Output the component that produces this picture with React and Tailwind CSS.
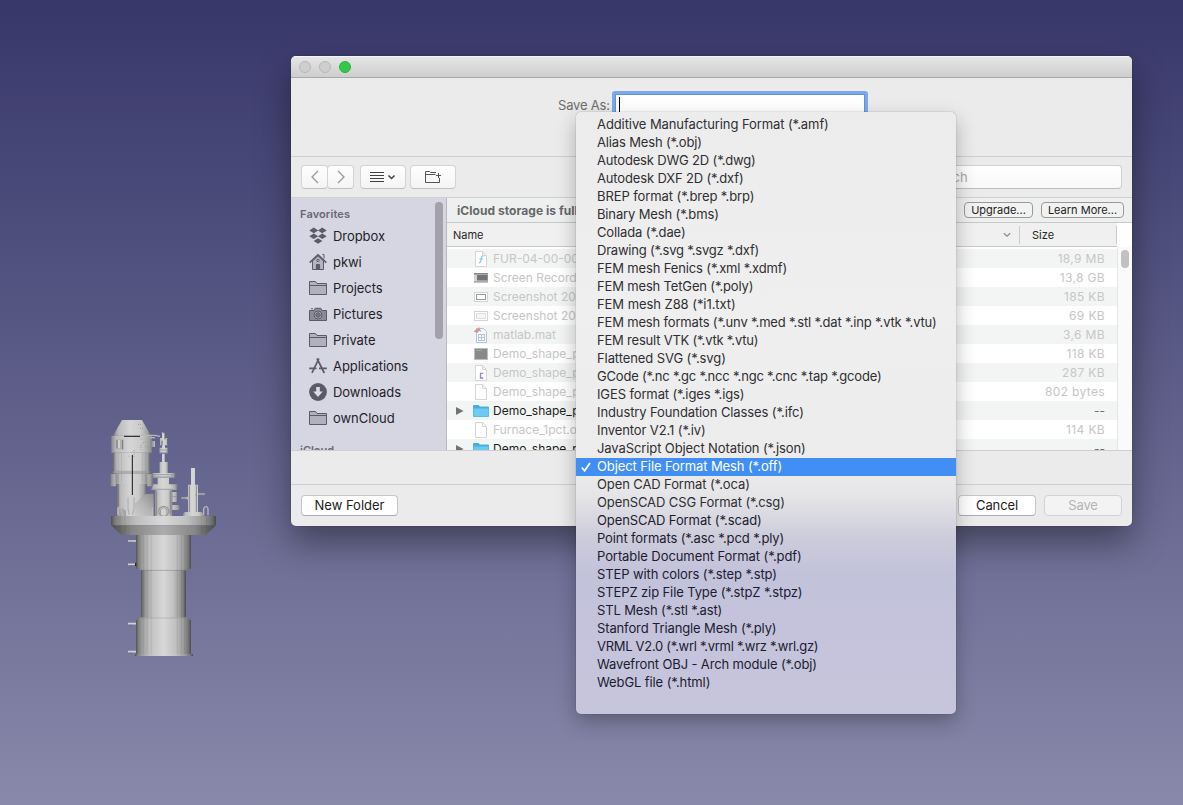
import React from "react";

const formats = [
  ["Additive Manufacturing Format (*.amf)", "tracking-[-0.09px]"],
  ["Alias Mesh (*.obj)", "tracking-[-0.15px]"],
  ["Autodesk DWG 2D (*.dwg)", "tracking-[-0.17px]"],
  ["Autodesk DXF 2D (*.dxf)", "tracking-[-0.15px]"],
  ["BREP format (*.brep *.brp)", "tracking-[-0.09px]"],
  ["Binary Mesh (*.bms)", "tracking-[-0.14px]"],
  ["Collada (*.dae)", "tracking-[-0.13px]"],
  ["Drawing (*.svg *.svgz *.dxf)", "tracking-[-0.21px]"],
  ["FEM mesh Fenics (*.xml *.xdmf)", "tracking-[-0.14px]"],
  ["FEM mesh TetGen (*.poly)", "tracking-[-0.16px]"],
  ["FEM mesh Z88 (*i1.txt)", "tracking-[-0.06px]"],
  ["FEM mesh formats (*.unv *.med *.stl *.dat *.inp *.vtk *.vtu)", "tracking-[-0.17px]"],
  ["FEM result VTK (*.vtk *.vtu)", "tracking-[-0.21px]"],
  ["Flattened SVG (*.svg)", "tracking-[-0.09px]"],
  ["GCode (*.nc *.gc *.ncc *.ngc *.cnc *.tap *.gcode)", "tracking-[-0.19px]"],
  ["IGES format (*.iges *.igs)", "tracking-[-0.12px]"],
  ["Industry Foundation Classes (*.ifc)", "tracking-[-0.11px]"],
  ["Inventor V2.1 (*.iv)", "tracking-[-0.1px]"],
  ["JavaScript Object Notation (*.json)", "tracking-[-0.1px]"],
  ["Object File Format Mesh (*.off)", "tracking-[-0.1px]"],
  ["Open CAD Format (*.oca)", "tracking-[-0.11px]"],
  ["OpenSCAD CSG Format (*.csg)", "tracking-[-0.11px]"],
  ["OpenSCAD Format (*.scad)", "tracking-[-0.1px]"],
  ["Point formats (*.asc *.pcd *.ply)", "tracking-[-0.12px]"],
  ["Portable Document Format (*.pdf)", "tracking-[-0.08px]"],
  ["STEP with colors (*.step *.stp)", "tracking-[-0.1px]"],
  ["STEPZ zip File Type (*.stpZ *.stpz)", "tracking-[-0.11px]"],
  ["STL Mesh (*.stl *.ast)", "tracking-[-0.13px]"],
  ["Stanford Triangle Mesh (*.ply)", "tracking-[-0.13px]"],
  ["VRML V2.0 (*.wrl *.vrml *.wrz *.wrl.gz)", "tracking-[-0.3px]"],
  ["Wavefront OBJ - Arch module (*.obj)", "tracking-[-0.13px]"],
  ["WebGL file (*.html)", "tracking-[-0.1px]"],
];

const SELECTED = "Object File Format Mesh (*.off)";

const places = [
  ["Dropbox", "dropbox"],
  ["pkwi", "home"],
  ["Projects", "folder"],
  ["Pictures", "camera"],
  ["Private", "folder"],
  ["Applications", "apps"],
  ["Downloads", "download"],
  ["ownCloud", "folder"],
];

const files = [
  ["FUR-04-00-00", "18,9 MB", "font"],
  ["Screen Recording", "13,8 GB", "movie"],
  ["Screenshot 2020", "185 KB", "shot"],
  ["Screenshot 2020", "69 KB", "shotLight"],
  ["matlab.mat", "3,6 MB", "matlab"],
  ["Demo_shape_pr", "118 KB", "term"],
  ["Demo_shape_pr", "287 KB", "c"],
  ["Demo_shape_pr", "802 bytes", "doc"],
  ["Demo_shape_pr", "--", "dir"],
  ["Furnace_1pct.off", "114 KB", "doc"],
  ["Demo_shape_pr", "--", "dir"],
];

function PlaceIcon({ kind }) {
  return (
    <svg width="18" height="18" viewBox="0 0 18 18" className="shrink-0" fill="none" stroke="#5b5a68">
      {kind === "dropbox" && (
        <g fill="#5b5a68" stroke="none">
          <path d="M4.800.600 9.200 3.400 4.800 6.200.300 3.400zM13.200.600l4.500 2.800-4.500 2.800L9 3.400zM4.800 6.500l4.400 2.800-4.400 2.800L.300 9.300zM13.200 6.500l4.500 2.800-4.500 2.800L9 9.300zM9 11.200l4.400 2.800L9 16.800 4.600 14z" />
        </g>
      )}
      {kind === "home" && (
        <>
          <path d="M3.500 8v8.500h11V8L9 2.800z" fill="#b5b4c2" />
          <path d="M.7 9.600 9 1.700l8.300 7.900" strokeWidth="1.500" />
          <path d="M13.500 1.500h1.500v4" />
          <path d="M7.400 16.500v-5h3.200v5z" fill="#5b5a68" />
          <circle cx="9" cy="7.400" r="1.200" />
        </>
      )}
      {kind === "folder" && (
        <>
          <path d="M.5 15.500v-13h6l1.500 2h9.500v11z" fill="#b1b0be" />
          <path d="M.5 6.500h17" />
        </>
      )}
      {kind === "camera" && (
        <>
          <path d="M.5 15.500v-10H5l1.200-2.200h5.600L13 5.500h4.500v10z" fill="#8b8a98" />
          <path d="M2 3.800h2" />
          <circle cx="9" cy="10" r="4" fill="#b5b4c2" />
          <circle cx="9" cy="10" r="2.300" fill="#77768a" />
        </>
      )}
      {kind === "apps" && (
        <>
          <path d="M9.900 1.500 3 15.800M8 1.500l7.300 14.500" strokeWidth="1.700" />
          <path d="M.2 11.300h7.300M10 11.300h7.800" strokeWidth="1.700" />
        </>
      )}
      {kind === "download" && (
        <>
          <circle cx="9" cy="9" r="8.900" fill="#5b5a68" stroke="none" />
          <path d="M7.200 4h3.600v4.500h3L9 14 4.200 8.500h3z" fill="#dbdae6" stroke="none" />
        </>
      )}
    </svg>
  );
}

function FileIcon({ kind }) {
  const page = <path d="M2.500.500h7l4 4v11h-11zM9.500.500v4h4" fill="#fff" stroke="#d6d6d6" />;
  return (
    <svg width="16" height="16" viewBox="0 0 16 16" className="shrink-0 overflow-visible" fill="none">
      {kind === "doc" && page}
      {kind === "font" && (
        <>
          {page}
          <path d="M10.500 5.200c-2-.6-2 1-2.300 2.800s-.5 4-2.400 3.600M6.500 8h3.600" stroke="#7cc8ee" strokeWidth="1.100" />
        </>
      )}
      {kind === "c" && (
        <>
          {page}
          <path d="M10.300 8.300H7.500v4.700h2.800" stroke="#9a82bb" strokeWidth="1.300" />
        </>
      )}
      {kind === "matlab" && (
        <>
          <path d="M3.500 1.500h7l3 3v11h-10z" fill="#f5f8fb" stroke="#b5c3d0" />
          <path d="M5 7.500h7M5 10.500h7M5 13.500h7M5.500 7v7M8.500 7v7M11.500 7v7" stroke="#b5c5d5" />
          <path d="M.8 4.500 4 2l2-2 2.500 5-2.500-1-1.500 2z" fill="#e39a85" />
          <path d="M.8 4.500 4 2l.5 3z" fill="#84a9cc" />
        </>
      )}
      {kind === "movie" && (
        <>
          <rect x="1" y="3" width="14" height="10" fill="#aaa" />
          <rect x="4" y="5" width="10.500" height="5" fill="#747474" />
          <rect x="1" y="5" width="3" height="6" fill="#d2d2d2" />
          <path d="M1 3.500h14" stroke="#8c8488" />
          <path d="M4 10.500h10" stroke="#a79bb5" />
          <path d="M1 12.500h14" stroke="#c2c2c2" />
        </>
      )}
      {(kind === "shot" || kind === "shotLight") && (
        <>
          <rect x="1.500" y="3.500" width="13" height="9" fill="#fff" stroke="#d5d5d5" />
          <rect
            x="3.500"
            y="5.500"
            width="9"
            height="5"
            fill={kind === "shot" ? "#fff" : "#f5f5f5"}
            stroke={kind === "shot" ? "#9a9a9a" : "#ddd"}
          />
        </>
      )}
      {kind === "term" && (
        <>
          <rect x="1.500" y="2.500" width="13" height="11" fill="#898989" stroke="#bdbdbd" />
          <path d="M3.500 4.500h5" stroke="#8fc49b" strokeDasharray="1.500 .5" />
        </>
      )}
      {kind === "dir" && (
        <>
          <path d="M0 3q0-1 1-1h4.500l1.500 1.500h8q1 0 1 1V13q0 1-1 1H1q-1 0-1-1z" fill="#48afdf" />
          <path d="M.5 5.500h15V13q0 .5-.5.500H1q-.5 0-.5-.5z" fill="#6bcbf5" />
        </>
      )}
    </svg>
  );
}

function Furnace() {
  return (
    <svg width="150" height="270" viewBox="0 0 450 810">
      <defs>
        <linearGradient id="metal">
          <stop offset="0" stopColor="#505050" />
          <stop offset=".04" stopColor="#7c7c7c" />
          <stop offset=".12" stopColor="#a0a0a0" />
          <stop offset=".25" stopColor="#c0c0c0" />
          <stop offset=".5" stopColor="#d8d8d8" />
          <stop offset=".72" stopColor="#c0c0c0" />
          <stop offset=".87" stopColor="#9a9a9a" />
          <stop offset=".96" stopColor="#707070" />
          <stop offset="1" stopColor="#4a4a4a" />
        </linearGradient>
        <linearGradient id="bright">
          <stop offset="0" stopColor="#8a8a8a" />
          <stop offset=".12" stopColor="#bbb" />
          <stop offset=".45" stopColor="#d6d6d6" />
          <stop offset=".75" stopColor="#cacaca" />
          <stop offset=".93" stopColor="#a2a2a2" />
          <stop offset="1" stopColor="#7c7c7c" />
        </linearGradient>
        <linearGradient id="cone">
          <stop offset="0" stopColor="#4c4c4c" />
          <stop offset=".2" stopColor="#868686" />
          <stop offset=".5" stopColor="#acacac" />
          <stop offset=".8" stopColor="#868686" />
          <stop offset="1" stopColor="#484848" />
        </linearGradient>
        <linearGradient id="elbow" x1="1" y1="0" x2="0" y2="1">
          <stop offset="0" stopColor="#8e8e8e" />
          <stop offset=".5" stopColor="#b4b4b4" />
          <stop offset="1" stopColor="#cccccc" />
        </linearGradient>
      </defs>
      <g fill="url(#bright)">
        <path d="M96 60h60l24 42v5H72v-5z" />
        <path d="M64 107h122v51H64z" />
        <path d="M69 158h111v62H69z" />
        <path d="M77 220h97v33H77z" />
        <path d="M82 252h85v96H82z" />
        <path d="M62 222h15v37H62zM172 222h17v37h-17z" />
        <path d="M187 219h68v14h-68z" />
        <path d="M203 233h34v20h-34zM190 253h72v17h-79z" />
        <path d="M195 270h52v78h-52z" />
        <path d="M208 186h26v33h-26zM216 162h8v25h-8zM208 143h25v17h-25zM210 114h24v22h-24zM216 96h9v50h-9z" />
        <path d="M303 204h12v52h-12zM294 254h30v84h-30zM285 336h50l6 5v7h-62v-7z" />
        <path d="M247 276h13v30h-13zM247 315h22v15h-22zM184 123h11v18h-11z" />
      </g>
      <path d="M167 282h24v66h-58v-35z" fill="url(#elbow)" />
      <path d="M82 318l26 14v16H90l-8-8z" fill="#a4a4a4" />
      <path d="M72 212h105l-3 9H77z" fill="#999" opacity=".6" />
      <path d="M69 158h4v56h-4zM176 158h4v56h-4zM82 252h4v70h-4z" fill="#747474" />
      <path d="M114 292q11-14 20 0v35l-6 18h-10l-4-18z" fill="#d0d0d0" />
      <path d="M132 292v35l-5 18M114 292v35l4 18" stroke="#999" strokeWidth="2" fill="none" />
      <path d="M102 109h48M127 165v120" stroke="#161616" strokeWidth="3" />
      <path d="M78 118h22v30H78z" fill="#b0b0b0" />
      <path d="M81 120v25M98 120v28" stroke="#787878" strokeWidth="3" />
      <path d="M87 120v25" stroke="#d8d8d8" strokeWidth="5" />
      <g fill="none" stroke="#9c9c9c" strokeWidth="3" strokeDasharray="3 3">
        <path d="M150 113l8 8M153 150v-15l10-10h12M165 140h10M144 73h10M150 85h10M132 150v20M117 167v6M175 150v-20" />
      </g>
      <path d="M154 106h40l16 3M180 113h15" stroke="#b8b8b8" strokeWidth="4" fill="none" />
      <path d="M218 98h7v20M233 115v19M216 122v14" stroke="#666" strokeWidth="3" fill="none" />
      <path d="M208 150h25M208 158h25M187 231h68M190 268h60M247 290h12M190 224h60" stroke="#888" strokeWidth="2" fill="none" />
      <path d="M274 294h18M324 282h21M292 290v9M318 282v7" stroke="#b4b4b4" strokeWidth="5" />
      <path d="M274 298h18M324 286h21" stroke="#777" strokeWidth="2" />
      <g fill="none" stroke="#b8b8b8" strokeWidth="4">
        <path d="M84 346v-18q3-10 8-4l8 24M341 346v-20q8-14 13 0v20M187 346v-24" />
        <circle cx="221" cy="334" r="15" stroke="#999" />
        <path d="M211 346v-16l10-8 10 8v16" stroke="#999" strokeWidth="3" />
      </g>
      <path d="M200 272v74M241 272v70M298 256v80M319 256v80" stroke="#8a8a8a" strokeWidth="3" />
      <path d="M62 224v33M187 224v33" stroke="#777" strokeWidth="2" />
      <path d="M63 348h315v28H63z" fill="url(#metal)" />
      <path d="M63 376h315l-31 29H94z" fill="url(#cone)" />
      <g fill="url(#metal)">
        <path d="M138 405h165v101l-12 5H150l-12-5z" />
        <path d="M153 511h135v144H153z" />
        <path d="M150 652h141l12 9v102H138V661z" />
        <path d="M135 762h174v6H135z" />
      </g>
      <path d="M138 505h12v6h138v-6h15M150 654h141" stroke="#777" strokeWidth="2" opacity=".5" fill="none" />
      <path d="M114 423h24M114 493h24M114 671h24M114 755h24" stroke="#d2d2d2" strokeWidth="5" />
      <path d="M117 427h9M117 497h18M117 676h9M117 760h9" stroke="#6d6d6d" strokeWidth="2" />
      <path d="M137 489v9" stroke="#222" strokeWidth="4" />
      <g stroke="#000" strokeWidth="3" opacity=".06">
        <path d="M160 405v358M172 405v358M184 405v358M262 405v358M274 405v358M284 405v358M90 350v50M105 350v53M350 350v45M335 350v50M85 158v90M95 158v90M157 158v90M167 158v90" />
      </g>
    </svg>
  );
}

const toolButton =
  "flex h-6 items-center justify-center rounded-[4px] border border-[#d4d4d4] border-b-[#c0c0c0] bg-gradient-to-b from-[#fefefe] to-[#f4f4f4]";

function Dialog() {
  return (
    <section className="absolute left-[291px] top-[56px] flex h-[470px] w-[841px] flex-col overflow-hidden rounded-[5px] bg-[#ebebeb]">
      <header className="flex h-[22px] shrink-0 items-center gap-2 border-b border-[#a9a9a9] border-t border-t-[#f5f5f5] bg-gradient-to-b from-[#e5e5e5] to-[#cecece] pl-2">
        <i className="size-3 rounded-full border border-[#b7b7b7] bg-[#cecece]" />
        <i className="size-3 rounded-full border border-[#b7b7b7] bg-[#cecece]" />
        <i className="size-3 rounded-full border border-[#2dae3c] bg-[#34c84a]" />
      </header>
      <div className="flex h-[79px] shrink-0 items-start border-b border-[#cfcfcf] pl-[267px] pt-[13px]">
        <label className="w-[54px] whitespace-nowrap pt-[6px] text-[13px] leading-4 tracking-[-0.2px] text-[#6d6d6d]">Save As:</label>
        <div className="h-[27px] w-[256px] rounded-[3px] border-[3px] border-[#7ca9ec] bg-white pl-[4px] pt-[3px] shadow-[inset_0_0_0_1px_#5f93df]">
          <i className="block h-4 w-px bg-black" />
        </div>
      </div>
      <div className="flex h-[41px] shrink-0 items-center border-b border-[#d0d0d0] px-[10px]">
        <div className="flex">
          <div className={`${toolButton} w-[27px]`}>
            <svg width="10" height="14" viewBox="0 0 10 14" fill="none" stroke="#999" strokeWidth="1.300"><path d="M8 1 2 7l6 6" /></svg>
          </div>
          <div className={`${toolButton} -ml-px w-[27px]`}>
            <svg width="10" height="14" viewBox="0 0 10 14" fill="none" stroke="#999" strokeWidth="1.300"><path d="m2 1 6 6-6 6" /></svg>
          </div>
        </div>
        <div className={`${toolButton} ml-[6px] w-[46px]`}>
          <svg width="26" height="12" viewBox="0 0 26 12" fill="none" stroke="#404040">
            <path d="M0 1.500h14M0 4.500h14M0 7.500h14M0 10.500h14" />
            <path d="m18.500 4.500 3 3 3-3" strokeWidth="1.500" />
          </svg>
        </div>
        <div className={`${toolButton} ml-[4px] w-[46px]`}>
          <svg width="18" height="14" viewBox="0 0 18 14" fill="none" stroke="#555">
            <path d="M12 2.500H6.500l-1-1h-4v11h14V8M1.500 4.500h10M12 5.500h5M14.500 3v5" />
          </svg>
        </div>
        <div className="ml-auto flex h-6 w-[220px] items-center rounded-[4px] border border-[#d0d0d0] border-b-[#bebebe] bg-gradient-to-b from-white to-[#f8f8f8] pl-[21px] pt-px text-[13px] tracking-[.1px] text-[#a8a8a8]">
          Search
        </div>
      </div>
      <div className="flex h-[253px] shrink-0 border-b border-[#cfcfcf]">
        <aside className="flex w-[156px] shrink-0 justify-between overflow-hidden border-r border-[#b8b7c3] bg-[#d6d5e2]">
          <div className="pl-[9px]">
            <h2 className="mb-[3px] mt-[7px] h-[15px] text-[11px] font-semibold leading-[19px] tracking-[0.12px] text-[#686775]">Favorites</h2>
            <ul>
              {places.map(([name, icon]) => (
                <li key={name} className="flex h-[26px] items-center gap-[6px] pl-[9px] text-[13px] text-[#1f1e29]">
                  <PlaceIcon kind={icon} />
                  <span className="pt-[2px] tracking-[-0.05px]">{name}</span>
                </li>
              ))}
            </ul>
            <h2 className="mt-[10px] text-[11px] font-semibold leading-[19px] text-[#686775]">iCloud</h2>
          </div>
          <div className="mr-[3px] mt-[4px] h-[137px] w-2 rounded-full bg-[#a2a1ad]" />
        </aside>
        <div className="flex min-w-0 flex-1 flex-col">
          <div className="flex h-[25px] shrink-0 items-center border-b border-[#c8c8c8] bg-[#eef0ef] pl-[10px] pr-2 text-[12px]">
            <b className="pt-px font-bold tracking-[0.05px] text-[#676767]">iCloud storage is full.</b>
            <button className="ml-auto h-4 w-[69px] whitespace-nowrap rounded-[4px] border border-[#999] bg-[#f1f2f1] text-[11px] leading-[14px] text-[#222]">Upgrade...</button>
            <button className="ml-2 h-4 w-[83px] whitespace-nowrap rounded-[4px] border border-[#999] bg-[#f1f2f1] text-[11px] leading-[14px] text-[#222]">Learn More...</button>
          </div>
          <div className="flex h-[24px] shrink-0 bg-white">
            <div className="flex w-[670px] items-center border-b border-[#cacaca] bg-[#f0f0f0] text-[11px] text-[#262626]">
              <span className="pl-[6px] pt-[2px]">Name</span>
              <svg className="ml-auto mr-[8px] mt-px" width="8" height="6" viewBox="0 0 8 6" fill="none" stroke="#8a8a8a" strokeWidth="1.200"><path d="m.8 1.200 3.200 3 3.200-3" /></svg>
              <span className="flex h-[18px] w-[98px] items-center border-x border-[#cbcbcb] pl-[12px] pt-[2px]">Size</span>
            </div>
          </div>
          <div className="flex min-h-0 flex-1 overflow-hidden">
            <ul className="w-[670px] bg-white pt-[2px]">
              {files.map(([name, size, icon], i) => (
                <li key={i} className={`flex h-[19px] items-center pr-[12px] text-[12px] ${i % 2 ? "bg-white" : "bg-[#f3f5f4]"} ${icon === "dir" ? "text-[#1c1c1c]" : "text-[#c6c6c6]"}`}>
                  <span className="w-[26px] pl-[9px]">
                    {icon === "dir" && <svg width="8" height="8" viewBox="0 0 8 8" fill="#727272"><path d="M0 0l7.500 4L0 8z" /></svg>}
                  </span>
                  <FileIcon kind={icon} />
                  <span className="ml-1">{name}</span>
                  <span className={`ml-auto ${icon === "dir" ? "text-[#6f6f6f]" : "tracking-[.35px]"}`}>{size}</span>
                </li>
              ))}
            </ul>
            <div className="flex flex-1 justify-center border-l border-[#e5e5e5] bg-[#fafafa] pt-[3px]">
              <i className="h-[18px] w-2 rounded-full bg-[#c1c1c1]" />
            </div>
          </div>
        </div>
      </div>
      <div className="h-[34px] shrink-0 border-b border-[#cfcfcf]" />
      <footer className="flex flex-1 items-center px-[10px] text-[13px]">
        <button className="h-[21px] w-[97px] rounded-[4px] border border-[#c6c6c6] border-b-[#acacac] bg-white leading-[19px] text-[#222]">New Folder</button>
        <button className="ml-auto h-[21px] w-[78px] rounded-[4px] border border-[#c6c6c6] border-b-[#acacac] bg-white leading-[19px] tracking-[-0.1px] text-[#222]">Cancel</button>
        <button className="ml-2 h-[21px] w-[78px] rounded-[4px] border border-[#d2d2d2] bg-[#f3f3f3] leading-[19px] tracking-[-0.1px] text-[#b4b4b4]">Save</button>
      </footer>
    </section>
  );
}

export default function App() {
  return (
    <main className="relative h-[805px] w-[1183px] overflow-hidden bg-gradient-to-b from-[#38376a] to-[#8989aa] font-['Inter',sans-serif]">
      <div className="absolute left-[90px] top-[400px]">
        <Furnace />
      </div>
      <div className="absolute left-[291px] top-[56px] h-[470px] w-[841px] rounded-[5px] shadow-[0_16px_34px_rgba(0,0,0,.4),0_0_1px_rgba(0,0,0,.6)]" />
      <Dialog />
      <ul className="absolute left-[576px] top-[112px] h-[602px] w-[380px] rounded-[5px] bg-[linear-gradient(to_bottom,#ececec_0px,#efefef_200px,#ececec_350px,#e6e6e8_382px,#cdccdb_425px,#c3c2db_460px,#c6c5dc_602px)] pt-[4px] shadow-[0_8px_20px_rgba(0,0,0,.27),0_0_1px_rgba(0,0,0,.6)]">
        {formats.map(([label, tracking], i) => (
          <li
            key={label}
            className={`flex h-[18px] items-center whitespace-nowrap text-[13px] leading-[16px] ${label === SELECTED ? "bg-[#418ff5] text-white" : i > 21 ? "text-[#1c1b2f]" : "text-[#2f2f33]"}`}
          >
            <span className="flex w-[21px] shrink-0 pl-[5px]">
              {label === SELECTED && (
                <svg width="10" height="10" viewBox="0 0 10 10" fill="none" stroke="#fff" strokeWidth="1.800"><path d="m.8 5.500 2.800 3.300L9 1" /></svg>
              )}
            </span>
            <span className={`pb-[2px] ${tracking}`}>{label}</span>
          </li>
        ))}
      </ul>
    </main>
  );
}
